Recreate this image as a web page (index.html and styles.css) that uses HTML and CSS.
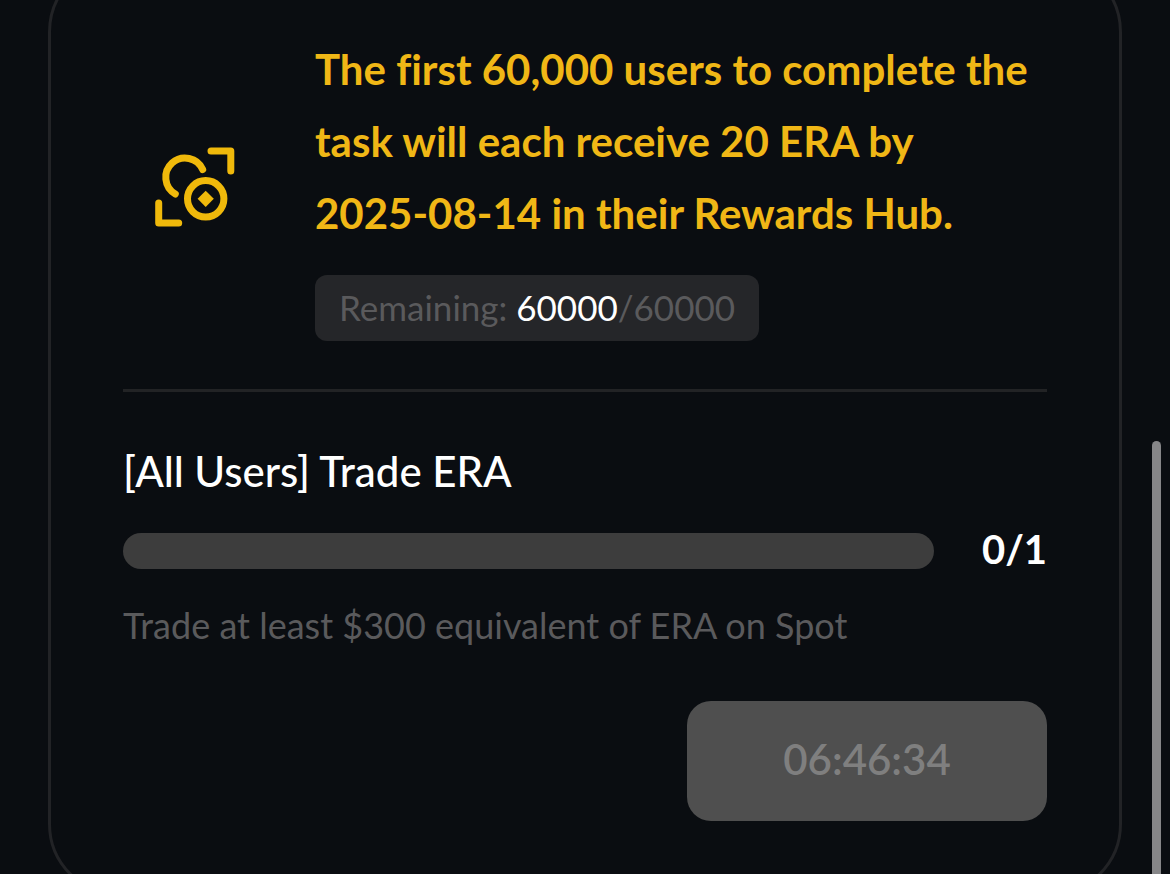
FILE: index.html
```html
<!DOCTYPE html>
<html lang="en">
	<head>
		<meta charset="UTF-8" />
		<meta name="viewport" content="width=device-width, initial-scale=1.0" />
		<title>Trade ERA</title>
		<link rel="stylesheet" href="styles.css">
	</head>
	<body>
		<main class="card">
			<section class="reward">
				<div class="reward-icon">
					<svg width="80" height="80" viewBox="0 0 80 80" fill="none" stroke="currentColor" stroke-width="7" stroke-linecap="round" stroke-linejoin="round" aria-hidden="true">
						<path d="M56 4H75.8V24" />
						<path d="M3.7 56V76H23.7" />
						<path d="M47.7 22.5A19.3 19.3 0 1 0 20.3 47" />
						<circle cx="50.7" cy="51.8" r="18.2" />
						<path d="M50.7 43.7L58.8 51.8L50.7 59.9L42.6 51.8Z" fill="currentColor" stroke="none" />
					</svg>
				</div>
				<div class="reward-info">
					<p class="reward-text">The first 60,000 users to complete the task will each receive 20 ERA by <span class="date">2025-08-14</span> in their Rewards Hub.</p>
					<p class="remaining">Remaining: <span class="left">60000</span>/60000</p>
				</div>
			</section>

			<section class="task">
				<h2 class="task-title" id="task-title">[All Users] Trade ERA</h2>
				<div class="task-progress">
					<div class="bar" role="progressbar" aria-labelledby="task-title" aria-valuemin="0" aria-valuemax="1" aria-valuenow="0"></div>
					<span class="count">0/1</span>
				</div>
				<p class="task-desc">Trade at least $300 equivalent of ERA on Spot</p>
				<button class="timer" type="button" disabled>06:46:34</button>
			</section>
		</main>
		<div class="scroll-thumb"></div>
	</body>
</html>
```
FILE: styles.css
```css
* {
	box-sizing: border-box;
}

body {
	margin: 0;
	overflow: hidden;
	background-color: #0a0d11;
	color: #fff;
	font-family: Lato, "Liberation Sans", sans-serif;
	font-size: 36px;
}

p,
h2 {
	margin: 0;
}

/* The card is scrolled partly past the top of the view */
.card {
	margin: -40px 48px 0;
	padding: 70px 72px 72px;
	border: 3px solid #222326;
	border-radius: 72px;
}

.reward {
	display: flex;
	align-items: center;
	gap: 48px;
	padding-bottom: 48px;
	border-bottom: 3px solid #222325;
}

.reward-icon {
	display: flex;
	justify-content: center;
	flex: 0 0 144px;
	color: #f0b90b;
}

.reward-info {
	flex: 1;
}

.reward-text {
	color: #f0b716;
	font-size: 42px;
	font-weight: 700;
	font-variant-ligatures: none;
	line-height: 72px;
}

.date {
	white-space: nowrap;
}

.remaining {
	display: inline-block;
	margin-top: 26px;
	padding: 0 24px 2px;
	border-radius: 12px;
	background-color: #252629;
	color: #5a5a5c;
	font-size: 35px;
	line-height: 64px;
	vertical-align: top;
}

.left {
	color: #fff;
}

.task {
	display: flex;
	flex-direction: column;
	padding-top: 48px;
}

.task-title {
	font-size: 42px;
	font-weight: 500;
	line-height: 62px;
}

.task-progress {
	display: flex;
	align-items: center;
	gap: 48px;
	margin-top: 20px;
}

.bar {
	flex: 1;
	height: 36px;
	border-radius: 18px;
	background-color: #3d3d3d;
}

.count {
	padding-bottom: 4px;
	font-size: 40px;
	font-weight: 700;
	line-height: 54px;
}

.task-desc {
	margin-top: 16px;
	color: #5a5a5c;
	line-height: 58px;
}

.timer {
	align-self: flex-end;
	width: 360px;
	height: 120px;
	margin-top: 47px;
	padding: 0 0 4px;
	border: none;
	border-radius: 24px;
	background-color: #4f4f4f;
	color: #7f7f7f;
	font-family: inherit;
	font-size: 42px;
	font-weight: 600;
}

.scroll-thumb {
	position: fixed;
	top: 441px;
	right: 9px;
	bottom: -12px;
	width: 9px;
	border-radius: 5px;
	background-color: #868688;
}
```
